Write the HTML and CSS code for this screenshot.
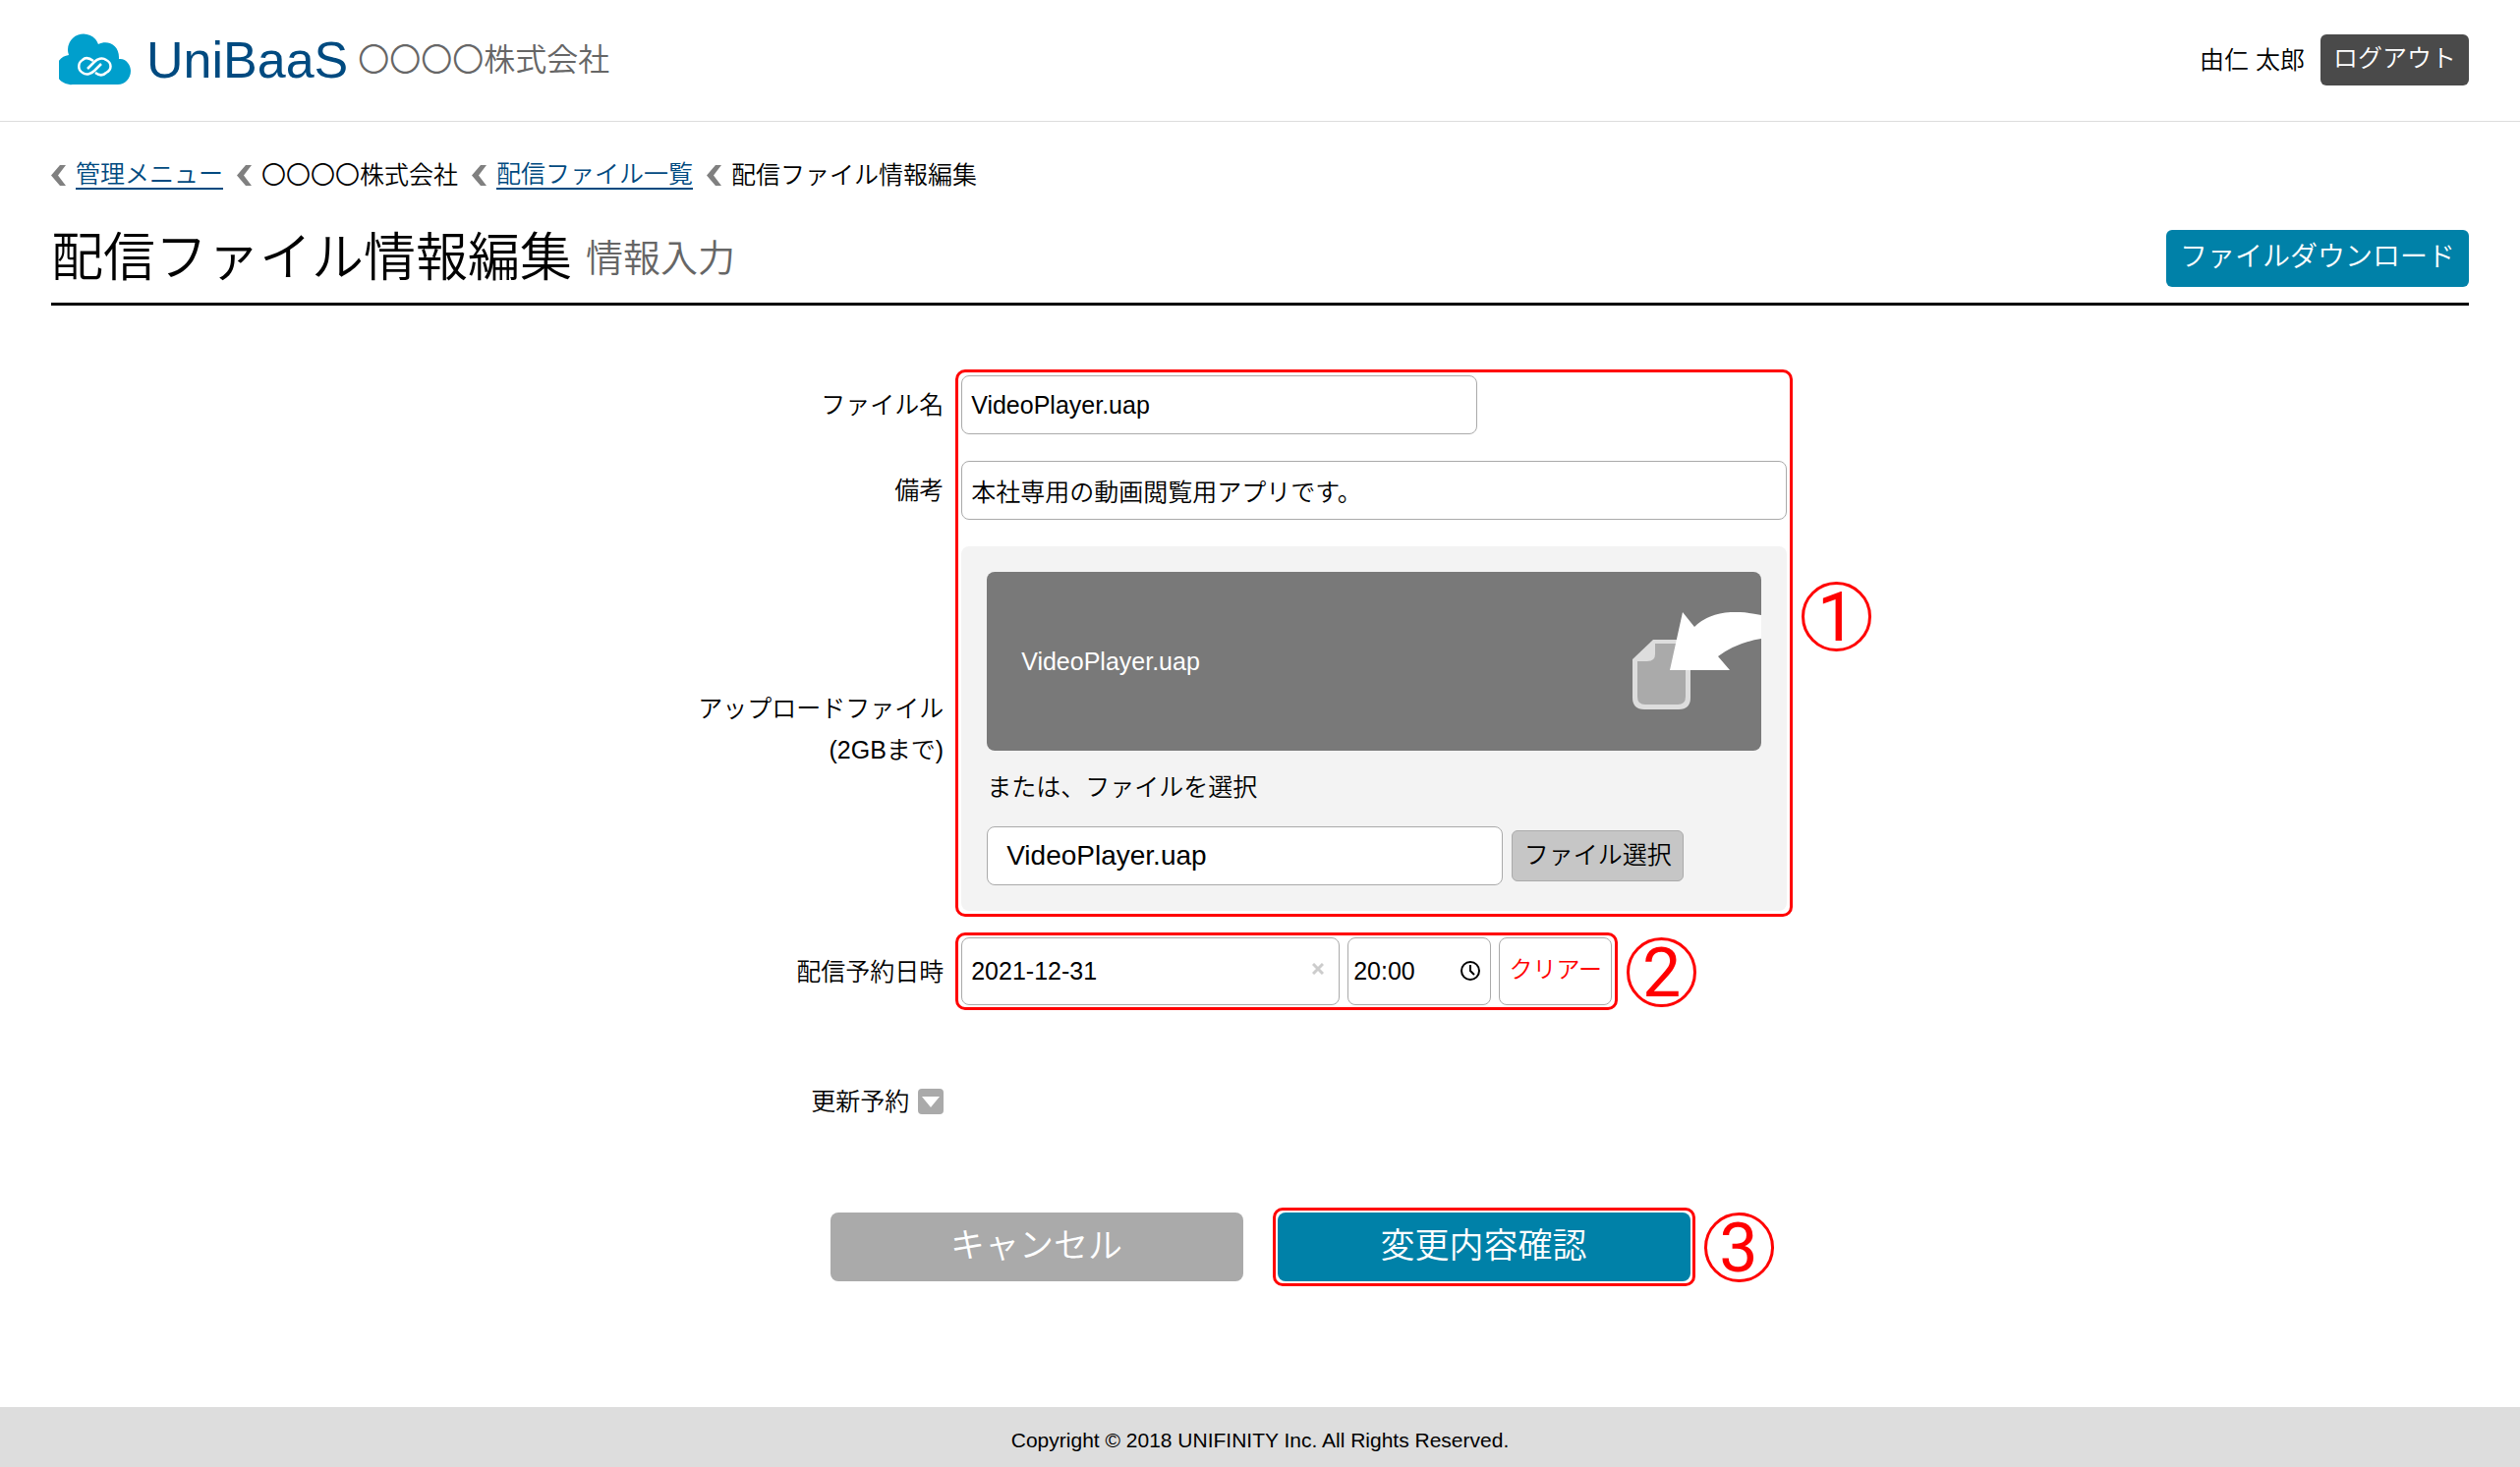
FILE: index.html
```html
<!DOCTYPE html>
<html lang="ja">
<head>
  <meta charset="UTF-8" />
  <meta name="viewport" content="width=device-width, initial-scale=1.0" />
  <title>配信ファイル情報編集 | UniBaaS</title>
  <link rel="stylesheet" href="styles.css">
</head>
<body>

  <!-- Site header -->
  <header class="site-header">
    <div class="brand">
      <svg class="brand-cloud" viewBox="0 0 73 53" aria-hidden="true">
        <path d="M14 52 A15 15 0 0 1 10 22 A15.5 15.5 0 0 1 40 11 C50 6 62 12 61 26 C68 25 73 32 73 38 C73 46 67 52 60 52 Z" fill="#009fcc"/>
        <path d="M35 28 C31 25 27 24 24 27 C19 30 19 37 24 40 C28 43 33 41 36 38 L43 31" fill="none" stroke="#fff" stroke-width="2.5"/>
        <path d="M37 40 C41 43 45 43 48 40 C54 37 54 30 48 27 C44 24 39 26 36 29 L29 36" fill="none" stroke="#fff" stroke-width="2.5"/>
      </svg>
      <span class="brand-name">UniBaaS</span>
      <span class="brand-company">〇〇〇〇株式会社</span>
    </div>
    <div class="account">
      <span>由仁 太郎</span>
      <button type="button" class="btn btn-logout">ログアウト</button>
    </div>
  </header>

  <main class="content">
    <!-- Breadcrumb -->
    <nav class="breadcrumb">
      <span class="crumb"><svg class="chevron" viewBox="0 0 15 21"><path d="M9 0H15L7 10.500L15 21H9L0 10.500Z"/></svg><a href="#">管理メニュー</a></span>
      <span class="crumb"><svg class="chevron" viewBox="0 0 15 21"><path d="M9 0H15L7 10.500L15 21H9L0 10.500Z"/></svg>〇〇〇〇株式会社</span>
      <span class="crumb"><svg class="chevron" viewBox="0 0 15 21"><path d="M9 0H15L7 10.500L15 21H9L0 10.500Z"/></svg><a href="#">配信ファイル一覧</a></span>
      <span class="crumb"><svg class="chevron" viewBox="0 0 15 21"><path d="M9 0H15L7 10.500L15 21H9L0 10.500Z"/></svg>配信ファイル情報編集</span>
    </nav>

    <!-- Page title -->
    <div class="title-bar">
      <h1>配信ファイル情報編集 <small>情報入力</small></h1>
      <button type="button" class="btn btn-download">ファイルダウンロード</button>
    </div>

    <form>
      <div class="fields">
        <label class="label row-name" for="fileName">ファイル名</label>
        <input class="input input-short field row-name" type="text" id="fileName" value="VideoPlayer.uap">

        <label class="label row-note" for="note">備考</label>
        <input class="input field row-note" type="text" id="note" value="本社専用の動画閲覧用アプリです。">

        <label class="label row-upload" for="uploadFile">アップロードファイル<br>(2GBまで)</label>
        <div class="upload field row-upload">
          <div class="drop-area">
            <span>VideoPlayer.uap</span>
            <svg class="drop-icon" viewBox="0 0 131 100" aria-hidden="true">
              <path d="M21 28H48Q59 28 59 39V87Q59 99 47 99H12Q0 99 0 87V48Z" fill="#ddd"/>
              <path d="M23 32H46Q54 32 54 40V86Q54 94 46 94H13Q5 94 5 86V50H15Q23 50 23 43Z" fill="#aaa"/>
              <path d="M51 0L63 15Q85 -7 131 3V27Q106 31 87 45L99 59H38Z" fill="#fff"/>
            </svg>
          </div>
          <p class="upload-hint">または、ファイルを選択</p>
          <div class="upload-pick">
            <input class="input input-short input-file" type="text" id="uploadFile" value="VideoPlayer.uap">
            <button type="button" class="btn btn-pick">ファイル選択</button>
          </div>
        </div>

        <!-- Frame round the first three fields -->
        <div class="mark mark-fields"><span class="mark-no">1</span></div>

        <label class="label row-date" for="date">配信予約日時</label>
        <div class="schedule field row-date">
          <div class="with-icon date-box">
            <input class="input" type="text" id="date" value="2021-12-31">
            <button type="button" class="date-clear" aria-label="日付を消去"><svg viewBox="0 0 12 12"><path d="M1 1L11 11M11 1L1 11"/></svg></button>
          </div>
          <div class="with-icon time-box">
            <input class="input" type="text" aria-label="時刻" value="20:00">
            <svg class="clock" viewBox="0 0 22 22"><circle cx="11" cy="11" r="9"/><path d="M11 5V11L15 15"/></svg>
          </div>
          <button type="button" class="btn btn-clear">クリアー</button>
          <div class="mark mark-over"><span class="mark-no">2</span></div>
        </div>

        <div class="label row-update">
          更新予約
          <button type="button" class="toggle" aria-label="更新予約を開く"><svg viewBox="0 0 26 26"><path d="M4 8H22L13 19Z" fill="#fff"/></svg></button>
        </div>
      </div>

      <!-- Form buttons -->
      <div class="actions">
        <button type="button" class="btn btn-large btn-cancel">キャンセル</button>
        <div class="confirm">
          <button type="submit" class="btn btn-large">変更内容確認</button>
          <div class="mark mark-over mark-tight"><span class="mark-no">3</span></div>
        </div>
      </div>
    </form>
  </main>

  <footer class="site-footer">Copyright © 2018 UNIFINITY Inc. All Rights Reserved.</footer>

</body>
</html>
```
FILE: styles.css
```css
* {
  box-sizing: border-box;
}

/* Page layout */
body {
  margin: 0;
  min-height: 100vh;
  display: flex;
  flex-direction: column;
  font-family: "Liberation Sans", "Noto Sans CJK JP", sans-serif;
  font-size: 25px;
  font-weight: 350;
  line-height: 40px;
  color: #000;
  background-color: #fff;
}

button,
input {
  font: inherit;
  color: inherit;
}

/* Header */
.site-header {
  display: flex;
  justify-content: space-between;
  align-items: center;
  height: 124px;
  padding: 0 52px 2px 60px;
  border-bottom: 1px solid #ddd;
}

.brand,
.account {
  display: flex;
  align-items: center;
}

.brand-cloud {
  width: 73px;
  height: 53px;
  margin-right: 16px;
}

.brand-name {
  margin-right: 10px;
  font-size: 52px;
  color: #004a80;
}

.brand-company {
  font-size: 32px;
  color: #666;
}

.account {
  gap: 16px;
}

/* Buttons */
.btn {
  padding: 0 0 3px;
  border: none;
  border-radius: 6px;
  background-color: #0081a8;
  color: #fff;
  cursor: pointer;
}

.btn-logout {
  width: 151px;
  height: 52px;
  background-color: #4a4a4a;
}

.btn-download {
  width: 308px;
  height: 58px;
  font-size: 28px;
}

.btn-pick {
  width: 175px;
  height: 52px;
  border: 1px solid #aaa;
  background-color: #c6c6c6;
  color: #000;
}

.btn-clear {
  width: 115px;
  height: 69px;
  border: 1px solid #aaa;
  border-radius: 8px;
  background-color: #fff;
  color: #f00;
  font-size: 24px;
}

.btn-large {
  display: block;
  width: 420px;
  height: 70px;
  border-radius: 8px;
  font-size: 35px;
}

.btn-cancel {
  background-color: #aaa;
}

/* Main content */
.content {
  flex: 1;
  padding: 34px 52px 0;
}

.breadcrumb {
  display: flex;
  gap: 14px;
}

.crumb {
  display: flex;
  align-items: center;
  gap: 10px;
}

.crumb a {
  color: #004a80;
  text-decoration: none;
  line-height: 28px;
  border-bottom: 2px solid #004a80;
}

.chevron {
  width: 15px;
  height: 21px;
  fill: #808080;
}

.title-bar {
  display: flex;
  justify-content: space-between;
  align-items: center;
  margin-top: 36px;
  padding-bottom: 16px;
  border-bottom: 3px solid #000;
}

h1 {
  display: flex;
  align-items: center;
  gap: 14px;
  margin: 0;
  font-size: 53px;
  font-weight: 350;
  line-height: 58px;
}

h1 small {
  font-size: 38px;
  color: #666;
}

/* Form fields */
.fields {
  display: grid;
  grid-template-columns: 37% minmax(0, 840px);
  column-gap: 16px;
  row-gap: 27px;
  align-items: center;
  margin-top: 71px;
}

.row-name { grid-row: 1; }
.row-note { grid-row: 2; }
.row-upload { grid-row: 3; }
.row-date { grid-row: 4; }
.row-update { grid-row: 5; }

.label {
  grid-column: 1;
  padding-right: 2px;
  text-align: right;
  line-height: 42px;
}

.field {
  grid-column: 2;
}

.input {
  width: 100%;
  height: 60px;
  padding: 0 9px;
  border: 1px solid #aaa;
  border-radius: 8px;
  background-color: #fff;
}

.input-short {
  width: 525px;
}

.input-file {
  padding: 0 19px;
  font-size: 28px;
}

/* Upload panel */
.upload {
  padding: 26px;
  border-radius: 8px;
  background-color: #f3f3f3;
}

.drop-area {
  display: flex;
  justify-content: space-between;
  align-items: center;
  height: 182px;
  padding-left: 35px;
  border-radius: 8px;
  background-color: #797979;
  color: #fff;
}

.drop-icon {
  width: 131px;
  height: 100px;
}

.upload-hint {
  margin: 17px 0 20px;
}

.upload-pick {
  display: flex;
  align-items: center;
  gap: 9px;
}

/* Schedule row */
.schedule {
  position: relative;
  justify-self: start;
  display: flex;
  gap: 8px;
}

.schedule .input {
  height: 69px;
}

.with-icon {
  position: relative;
}

.date-box {
  width: 385px;
}

.time-box {
  width: 146px;
}

.time-box .input {
  padding: 0 5px;
}

.date-clear {
  position: absolute;
  top: 20px;
  right: 12px;
  width: 20px;
  height: 24px;
  padding: 0;
  border: none;
  background: none;
}

.date-clear svg {
  display: block;
  width: 12px;
  height: 12px;
  margin: auto;
  stroke: #ccc;
  stroke-width: 3;
}

.clock {
  position: absolute;
  top: 23px;
  right: 10px;
  width: 22px;
  height: 22px;
  fill: none;
  stroke: #000;
  stroke-width: 2;
}

.row-update {
  display: flex;
  justify-content: flex-end;
  align-items: center;
  gap: 9px;
  margin-top: 50px;
}

.toggle {
  width: 26px;
  height: 26px;
  padding: 0;
  border: none;
  border-radius: 4px;
  background-color: #aaa;
}

.toggle svg {
  display: block;
}

/* Numbered red frames */
.mark {
  position: relative;
  border: 3px solid #f00;
  border-radius: 10px;
  pointer-events: none;
}

.mark-fields {
  grid-column: 2;
  grid-row: 1 / 4;
  align-self: stretch;
  margin: -6px;
}

.mark-over {
  position: absolute;
  inset: -5px -6px;
}

.mark-tight {
  inset: -5px;
}

.mark-no {
  position: absolute;
  top: 50%;
  left: 100%;
  width: 71px;
  height: 71px;
  margin: -35px 0 0 12px;
  border: 3px solid #f00;
  border-radius: 50%;
  font-family: Roboto, "Liberation Sans", sans-serif;
  font-size: 70px;
  font-weight: 400;
  line-height: 67px;
  text-align: center;
  color: #f00;
}

.mark-fields .mark-no {
  top: 45%;
}

/* Form buttons */
.actions {
  display: flex;
  justify-content: center;
  gap: 35px;
  margin-top: 92px;
}

.confirm {
  position: relative;
}

/* Footer */
.site-footer {
  height: 61px;
  padding-top: 14px;
  background-color: #ddd;
  text-align: center;
  font-size: 21px;
}
```
